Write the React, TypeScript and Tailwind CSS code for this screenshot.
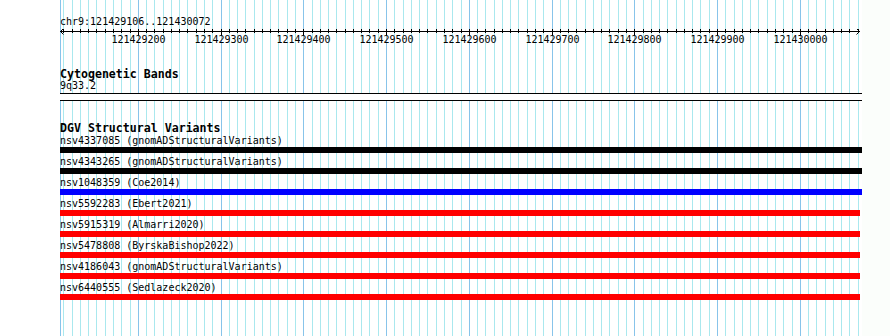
const START = 121429106;
const END = 121430072;
const SCALE = 0.8275;

// pixel x inside the 802px track column for a base position
const xOf = (bp: number) => Math.floor(0.5 + (bp - START) * SCALE) + 0.5;

const minorTicks: number[] = [];
for (let bp = Math.ceil(START / 10) * 10; bp <= END; bp += 10) minorTicks.push(bp);
const majorTicks = minorTicks.filter((bp) => bp % 100 === 0);

const variants = [
  { id: "nsv4337085", study: "gnomADStructuralVariants", color: "bg-black", w: "w-[802px]" },
  { id: "nsv4343265", study: "gnomADStructuralVariants", color: "bg-black", w: "w-[802px]" },
  { id: "nsv1048359", study: "Coe2014", color: "bg-[#0000ff]", w: "w-[802px]" },
  { id: "nsv5592283", study: "Ebert2021", color: "bg-[#ff0000]", w: "w-[800px]" },
  { id: "nsv5915319", study: "Almarri2020", color: "bg-[#ff0000]", w: "w-[800px]" },
  { id: "nsv5478808", study: "ByrskaBishop2022", color: "bg-[#ff0000]", w: "w-[800px]" },
  { id: "nsv4186043", study: "gnomADStructuralVariants", color: "bg-[#ff0000]", w: "w-[800px]" },
  { id: "nsv6440555", study: "Sedlazeck2020", color: "bg-[#ff0000]", w: "w-[800px]" },
];

function Grid() {
  return (
    <svg className="absolute inset-0" width={802} height={336} shapeRendering="crispEdges">
      <line x1={0.5} x2={0.5} y1={0} y2={336} stroke="#88c4ea" />
      {minorTicks.map((bp) => (
        <line
          key={bp}
          x1={xOf(bp)}
          x2={xOf(bp)}
          y1={0}
          y2={336}
          stroke={bp % 100 === 0 ? "#88c4ea" : "#aae8ee"}
        />
      ))}
    </svg>
  );
}

function Ruler() {
  return (
    <svg width={802} height={18} shapeRendering="crispEdges" className="block mt-[1px]">
      <line x1={0} x2={800} y1={2.5} y2={2.5} stroke="#000" />
      <path d="M3.5 -0.5 L0.5 2.5 L3.5 5.5" fill="none" stroke="#000" shapeRendering="auto" />
      <path d="M796.5 -0.5 L799.5 2.5 L796.5 5.5" fill="none" stroke="#000" shapeRendering="auto" />
      {minorTicks.map((bp) => (
        <line
          key={bp}
          x1={xOf(bp)}
          x2={xOf(bp)}
          y1={0}
          y2={bp % 100 === 0 ? 6 : 4}
          stroke="#000"
        />
      ))}
      {majorTicks.map((bp) => (
        <text
          key={bp}
          x={xOf(bp)}
          y={14}
          textAnchor="middle"
          fontSize={10}
          fontFamily="'DejaVu Sans Mono', monospace"
          fill="#000"
        >
          {bp}
        </text>
      ))}
    </svg>
  );
}

export default function App() {
  return (
    <div className="w-[890px] h-[336px] bg-white flex overflow-hidden text-black font-['DejaVu_Sans_Mono',monospace]">
      <div className="w-[60px] shrink-0" />

      <div className="relative w-[802px] shrink-0">
        <Grid />

        <div className="relative flex flex-col">
          {/* location + ruler */}
          <div className="pt-[15px] text-[10px] leading-[13px] whitespace-pre">
            chr9:121429106..121430072
          </div>
          <Ruler />

          {/* cytogenetic bands */}
          <div className="mt-[21px] font-bold text-[11.6px] leading-[12px] whitespace-pre">
            Cytogenetic Bands
          </div>
          <div className="text-[10px] leading-[12px]">9q33.2</div>
          <div className="mt-[1px] h-[8px] border-y border-black bg-white" />

          {/* DGV */}
          <div className="mt-[21px] mb-[1px] font-bold text-[11.6px] leading-[12px] whitespace-pre">
            DGV Structural Variants
          </div>
          {variants.map((v) => (
            <div key={v.id} className="flex flex-col pb-[3px]">
              <div className="text-[10px] leading-[12px] whitespace-pre">
                {v.id} ({v.study})
              </div>
              <div className={`h-[6px] ${v.w} ${v.color}`} />
            </div>
          ))}
        </div>
      </div>

      <div className="flex-1 bg-[#fbfefb]" />
    </div>
  );
}
